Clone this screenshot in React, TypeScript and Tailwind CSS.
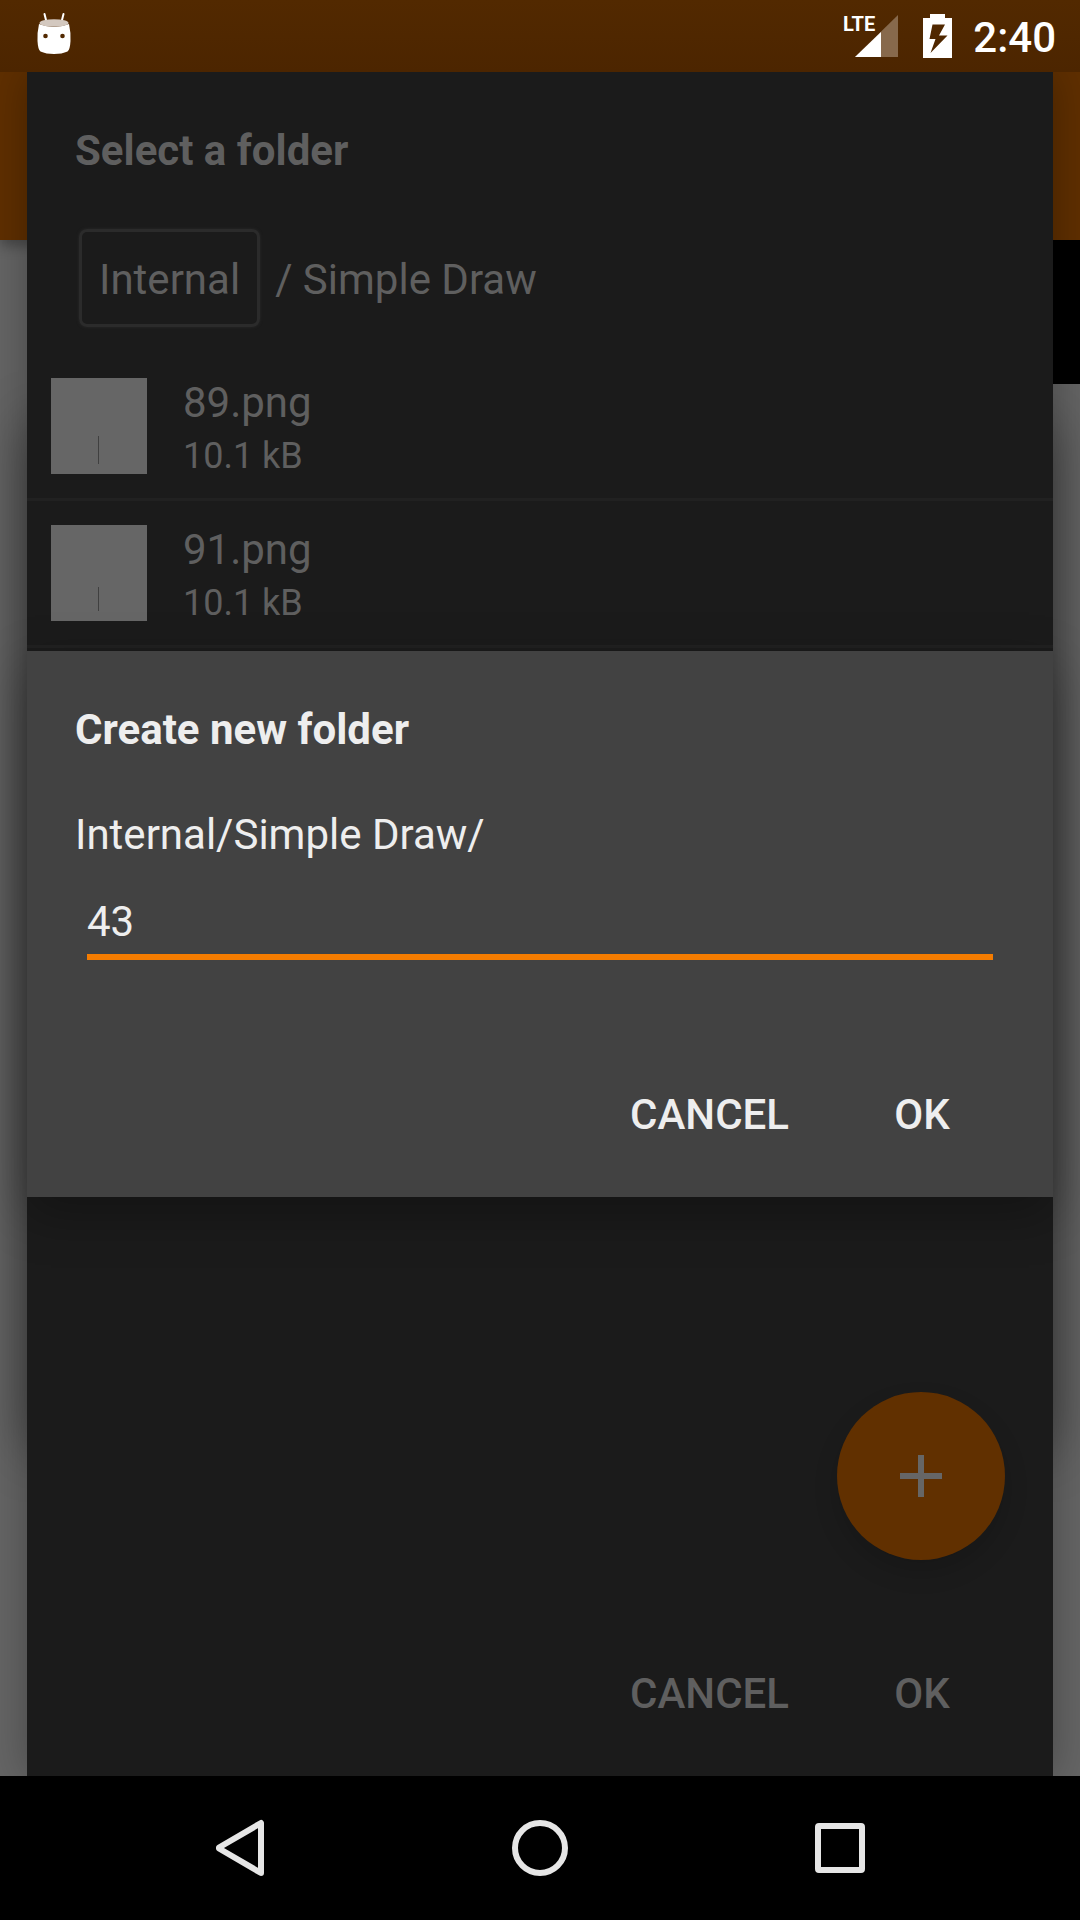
import type { ReactNode } from "react";

function AndroidHead() {
  return (
    <svg viewBox="0 0 36 42" className="h-[42px] w-9" aria-hidden="true">
      <path d="M8.500 2l2 8M27.500 2l-2 8" stroke="#fff" strokeWidth="2" strokeLinecap="round" />
      <path
        d="M3 12Q1 21 1.500 29Q2 38 4.500 39.500Q10 42 18 42Q26 42 31.500 39.500Q34 38 34.500 29Q35 21 33 12Q18 18 3 12Z"
        fill="#fff"
      />
      <ellipse cx="18" cy="11" rx="14.500" ry="3.800" fill="#d3c8bf" />
      <circle cx="9.500" cy="24" r="2.300" fill="#522900" />
      <circle cx="26.500" cy="24" r="2.300" fill="#522900" />
    </svg>
  );
}

function SignalIcon() {
  return (
    <svg viewBox="-2 -6 60 56" className="h-14 w-15" role="img" aria-label="LTE signal">
      <path d="M55 1v42H12z" fill="#87694c" />
      <path d="M38 18v25H12z" fill="#fff" />
      <text x="0" y="17" fill="#fff" fontSize="20" fontWeight="700">
        LTE
      </text>
    </svg>
  );
}

function BatteryIcon() {
  return (
    <svg viewBox="0 0 29 44" className="h-11 w-[29px]" role="img" aria-label="Battery charging">
      <path
        fill="#fff"
        fillRule="evenodd"
        d="M7 0h15v4h7v40H0V4h7zM9.500 10.500L6.500 25h6L7.500 39L24.500 21.500h-8.500L22 10.500z"
      />
    </svg>
  );
}

function StatusBar() {
  return (
    <header className="flex h-[72px] items-center justify-between bg-linear-to-b from-[#522900] to-[#4c2500] pr-6 pl-9 text-white">
      <div className="pb-1.5">
        <AndroidHead />
      </div>
      <div className="flex items-center">
        <SignalIcon />
        <div className="ml-[22px]">
          <BatteryIcon />
        </div>
        <span className="ml-[21px] pt-0.5 text-[42px] leading-[49px] font-medium">2:40</span>
      </div>
    </header>
  );
}

function CanvasScreen() {
  return (
    <div className="absolute inset-0 overflow-hidden bg-[#656565]" aria-hidden="true">
      <div className="relative h-[168px] bg-[#5f2f00] shadow-[0_6px_12px_rgba(0,0,0,0.3)]" />
      <div className="relative ml-auto size-36 bg-black" />
      <div className="absolute inset-x-[27px] top-[340px] bottom-[340px] shadow-[0_12px_50px_rgba(0,0,0,0.4)]" />
    </div>
  );
}

function DialogTitle({ id, children }: { id: string; children: ReactNode }) {
  return (
    <h2 id={id} className="px-12 pt-[54px] text-[42px] leading-[49px] font-bold">
      {children}
    </h2>
  );
}

function DialogActions() {
  return (
    <div className="flex justify-end gap-[13px] pr-[35px] pb-[29px]">
      <button type="button" className="h-[108px] min-w-48 px-6 text-[42px] leading-[49px] font-medium">
        CANCEL
      </button>
      <button type="button" className="h-[108px] min-w-48 px-6 text-[42px] leading-[49px] font-medium">
        OK
      </button>
    </div>
  );
}

function FileRow({ name, size, stroke }: { name: string; size: string; stroke: ReactNode }) {
  return (
    <li className="flex items-center gap-9 border-b-3 border-[#212121] px-6 py-6">
      <svg viewBox="0 0 96 96" className="size-24 bg-[#666]" aria-hidden="true">
        {stroke}
      </svg>
      <div>
        <p className="text-[42px] leading-[50px]">{name}</p>
        <p className="mt-[10px] text-4xl leading-9">{size}</p>
      </div>
    </li>
  );
}

function SelectFolderDialog() {
  return (
    <section
      aria-labelledby="select-title"
      className="relative mx-[27px] flex flex-1 flex-col bg-[#1b1b1b] text-[#5f5f5f] shadow-[0_0_40px_rgba(0,0,0,0.3)]"
    >
      <DialogTitle id="select-title">Select a folder</DialogTitle>
      <nav className="mt-[54px] mb-[27px] flex items-center gap-[15px] px-[52px] text-[42px] leading-[49px]">
        <button
          type="button"
          className="h-[98px] rounded-lg border-3 border-[#2b2b2b] px-[17px] pt-[3px] shadow-[0_0_3px_#2b2b2b]"
        >
          Internal
        </button>
        <span className="pt-[3px]">/ Simple Draw</span>
      </nav>
      <ul>
        <FileRow name="89.png" size="10.1 kB" stroke={<path d="M47.500 58v28" stroke="#404040" />} />
        <FileRow name="91.png" size="10.1 kB" stroke={<path d="M47.500 62v24" stroke="#404040" />} />
      </ul>
      <button
        type="button"
        aria-label="Create new folder"
        className="mt-auto mr-12 mb-[79px] flex size-[168px] items-center justify-center self-end rounded-full bg-[#613000] shadow-[0_12px_24px_rgba(0,0,0,0.15)]"
      >
        <svg viewBox="0 0 42 42" className="size-[42px]" aria-hidden="true">
          <path d="M21 0v42M0 21h42" stroke="#666" strokeWidth="6" />
        </svg>
      </button>
      <DialogActions />
    </section>
  );
}

function CreateFolderDialog() {
  return (
    <div className="absolute inset-0 flex items-center overflow-hidden px-[27px]">
      <section
        role="dialog"
        aria-labelledby="create-title"
        className="w-full bg-[#424242] text-[#eee] shadow-[0_16px_48px_rgba(0,0,0,0.3)]"
      >
        <DialogTitle id="create-title">Create new folder</DialogTitle>
        <div className="px-12 pt-14 pb-[100px] text-[42px] leading-[49px]">
          <label htmlFor="folder-name" className="block">
            Internal/Simple Draw/
          </label>
          <div className="mt-[38px] px-3">
            <input
              id="folder-name"
              type="text"
              defaultValue="43"
              className="block h-[63px] w-full border-b-6 border-[#f57c00] bg-transparent pb-2 outline-none"
            />
          </div>
        </div>
        <DialogActions />
      </section>
    </div>
  );
}

function NavigationBar() {
  return (
    <nav className="grid h-36 grid-cols-3 bg-black px-[90px]">
      <button type="button" aria-label="Back" className="flex items-center justify-center">
        <svg viewBox="0 0 60 60" className="size-15" fill="none" aria-hidden="true">
          <path d="M51 5v50L9 30.500v-1z" stroke="#e6e6e6" strokeWidth="6" strokeLinejoin="round" />
        </svg>
      </button>
      <button type="button" aria-label="Home" className="flex items-center justify-center">
        <svg viewBox="0 0 60 60" className="size-15" fill="none" aria-hidden="true">
          <circle cx="30" cy="30" r="25" stroke="#e6e6e6" strokeWidth="6" />
        </svg>
      </button>
      <button type="button" aria-label="Recent apps" className="flex items-center justify-center">
        <svg viewBox="0 0 60 60" className="size-15" fill="none" aria-hidden="true">
          <rect x="8" y="8" width="44" height="44" rx="1" stroke="#e6e6e6" strokeWidth="6" strokeLinejoin="round" />
        </svg>
      </button>
    </nav>
  );
}

export default function App() {
  return (
    <div className="flex min-h-screen flex-col bg-black font-['Roboto',sans-serif]">
      <StatusBar />
      <main className="relative flex flex-1 flex-col overflow-hidden">
        <CanvasScreen />
        <SelectFolderDialog />
        <CreateFolderDialog />
      </main>
      <NavigationBar />
    </div>
  );
}
